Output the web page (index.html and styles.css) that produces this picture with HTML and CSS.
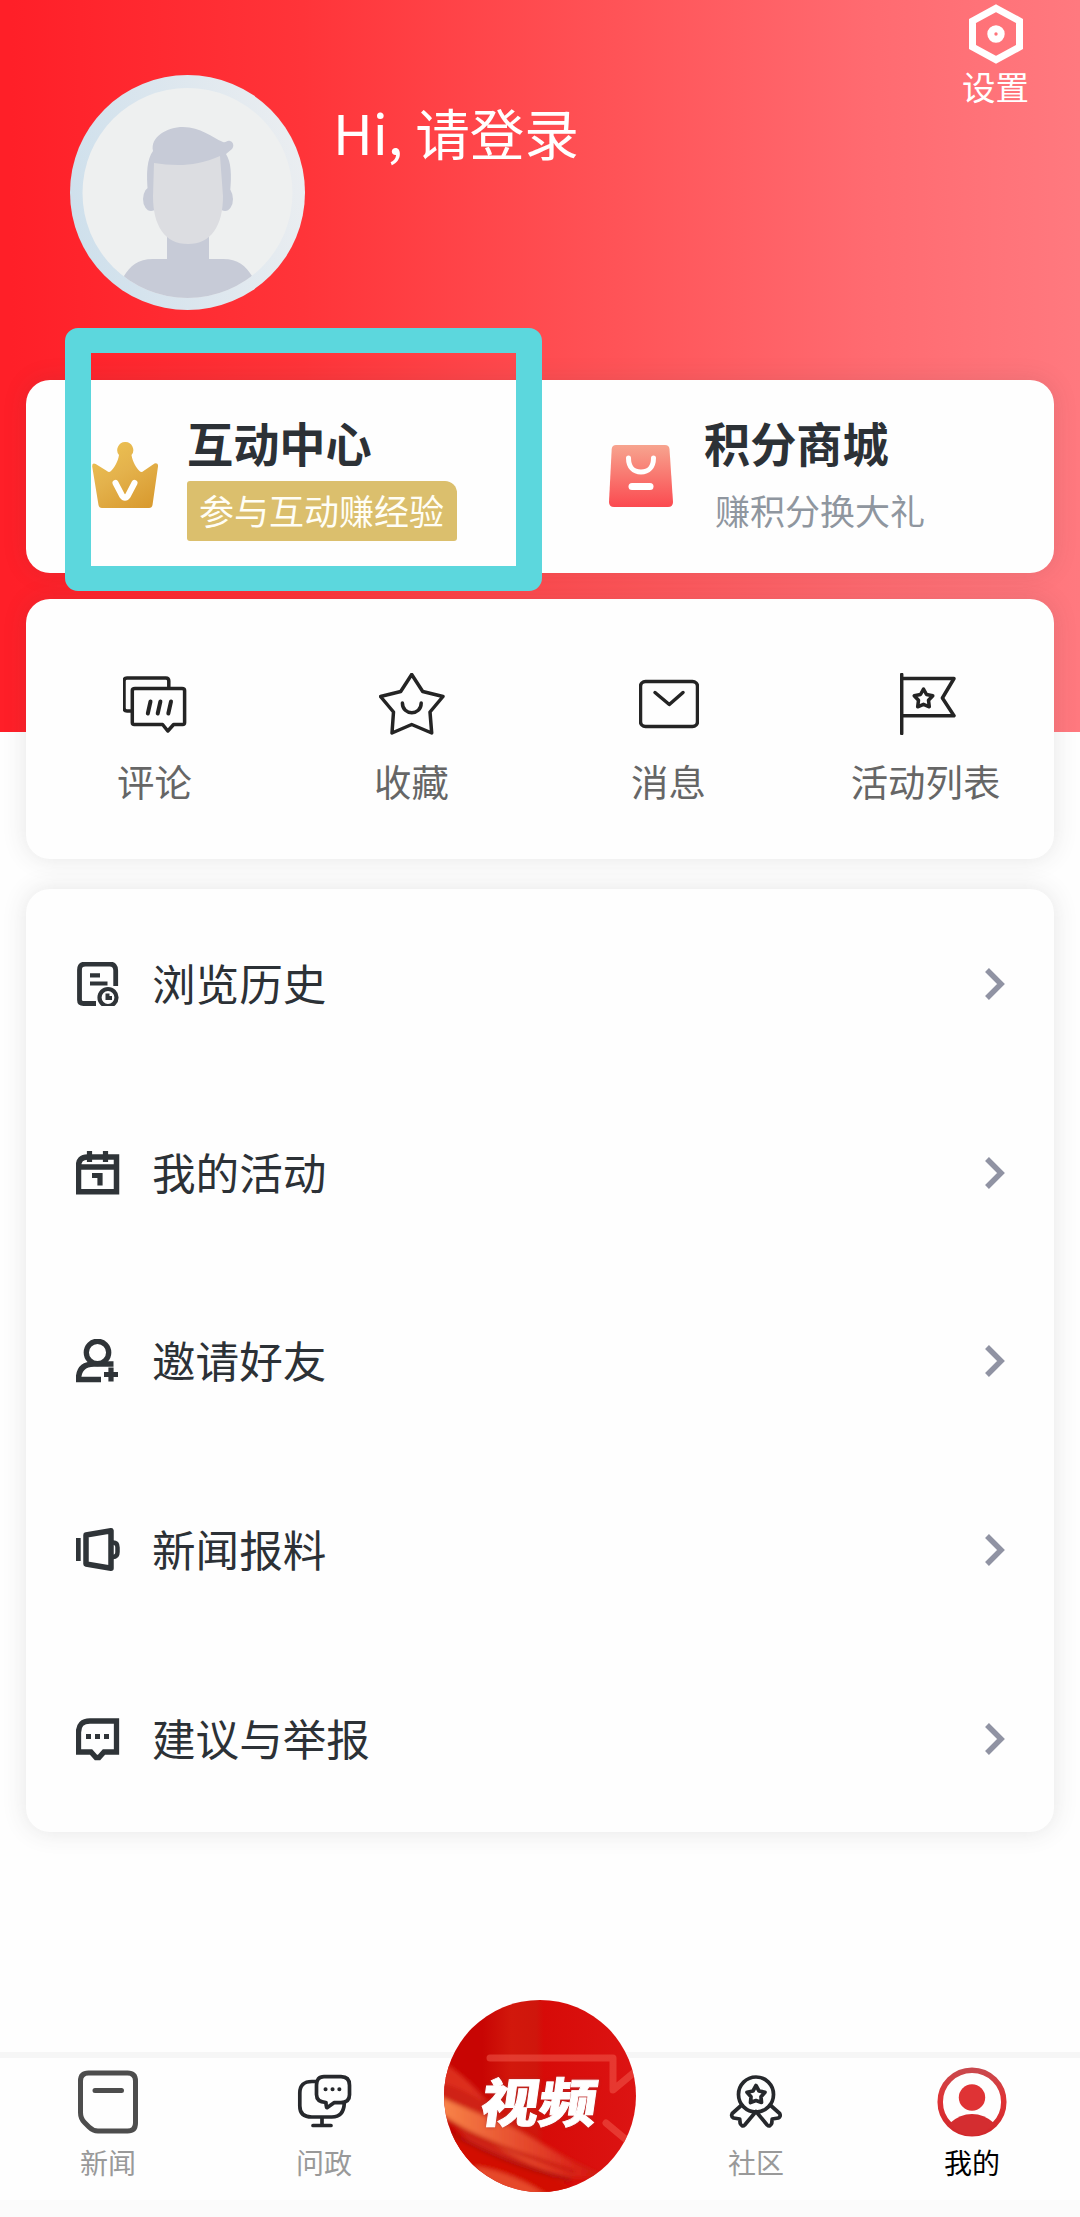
FILE: index.html
```html
<!DOCTYPE html>
<html lang="zh-CN">
<head>
<meta charset="utf-8">
<title>我的</title>
<link rel="stylesheet" href="styles.css">
</head>
<body>
<div class="app">
  <header class="profile">
    <svg class="avatar" viewBox="0 0 235 235">
      <defs>
        <linearGradient id="ring" x1="0" y1="0.5" x2="1" y2="0.3"><stop offset="0" stop-color="#cfe0ec"/><stop offset="1" stop-color="#ebeef1"/></linearGradient>
        <clipPath id="face"><circle cx="117.500" cy="118" r="105"/></clipPath>
      </defs>
      <circle cx="117.500" cy="117.500" r="117.500" fill="url(#ring)"/>
      <circle cx="117.500" cy="118" r="105" fill="#eef0f0"/>
      <g clip-path="url(#face)">
        <path d="M97 158h42v26h14c15 0 23 7 29 17l-10 30H62l-8-30c6-10 14-17 29-17h14z" fill="#c7cbd7"/>
        <ellipse cx="81" cy="124" rx="8" ry="12" fill="#c7cbd7"/>
        <ellipse cx="155" cy="124" rx="8" ry="12" fill="#c7cbd7"/>
        <path d="M78 118c-2-20-1-34 5-42-3-14 14-24 30-24 18 0 28 10 40 15 3 1 4-2 7-1 4 1 4 6 2 8l-6 5c5 8 6 20 4 39l-6 10H82z" fill="#c7cbd7"/>
        <path d="M84 88c20 3 42 4 66-7l3 40c0 30-12 48-35 48S83 151 83 121z" fill="#dcdde1"/>
      </g>
    </svg>
    <div class="greeting">Hi, 请登录</div>
    <div class="settings">
      <svg width="54" height="60" viewBox="0 0 54 60" fill="none" stroke="#fff">
        <path d="M27 4.200 50.500 17v26L27 55.800 3.500 43V17z" stroke-width="7"/>
        <circle cx="27" cy="30" r="5.200" stroke-width="7"/>
      </svg>
      <span>设置</span>
    </div>
  </header>

  <section class="card promos">
    <div class="promo">
      <svg class="promo-icon" width="66" height="66" viewBox="0 0 66 66">
        <defs><linearGradient id="gold" x1="0.2" y1="0" x2="0.800" y2="1"><stop offset="0" stop-color="#ecc152"/><stop offset="0.450" stop-color="#e4b24c"/><stop offset="1" stop-color="#d99b30"/></linearGradient></defs>
        <path d="M33 0a8 8 0 0 1 6.500 13c1 7 5 13 8 16q2 2 4 0l11-7.500q4-1 3.500 3L60.500 63q-.5 3-3.500 3H10q-3 0-3.500-3L.2 24.500q-.3-4 3.500-2.500L15 29q2 2 4 0c3-3 7-9 8-16A8 8 0 0 1 33 0z" fill="url(#gold)"/>
        <path d="M23.500 41l6.500 12.500q3 4.500 6 0L42.500 41" fill="none" stroke="#fff" stroke-width="6" stroke-linecap="round"/>
      </svg>
      <div class="promo-text">
        <b>互动中心</b>
        <span class="tag">参与互动赚经验</span>
      </div>
      <i class="highlight"></i>
    </div>
    <div class="promo">
      <svg class="promo-icon" width="66" height="66" viewBox="-1 0 66 66">
        <defs><linearGradient id="coral" x1="0" y1="0" x2="0" y2="1"><stop offset="0" stop-color="#f7a48f"/><stop offset="1" stop-color="#fb4a50"/></linearGradient></defs>
        <path d="M8 3h49q4 0 4.500 4L65 60q0 5-5 5H6q-5 0-5-5L3.700 7Q4.200 3 8 3z" fill="url(#coral)"/>
        <path d="M20.500 16c0 9 5 14 12.500 14s12.500-5 12.500-14" fill="none" stroke="#fff" stroke-width="5" stroke-linecap="round"/>
        <path d="M24 44.500h18" stroke="#fff" stroke-width="7" stroke-linecap="round"/>
      </svg>
      <div class="promo-text">
        <b>积分商城</b>
        <span class="hint">赚积分换大礼</span>
      </div>
    </div>
  </section>

  <section class="card shortcuts">
    <div class="shortcut">
      <svg width="64" height="62" viewBox="0 -4 64 62">
        <path d="M9.300 34H4q-3 0-3-3V4q0-3 3-3h38.800q3 0 3 3v7.500M12 11.500h47q2.600 0 2.600 2v32q0 2-2 2h-9l-5.800 6.500-5.200-6.500H11.300q-2 0-2-2v-32q0-2 2.700-2z"/>
        <path d="M27.500 24.500l-2.700 12m12.600-12-2.700 12m13.300-12-2.700 12" stroke-width="4"/>
      </svg>
      <span>评论</span>
    </div>
    <div class="shortcut">
      <svg width="66" height="62" viewBox="0 0 66 62"><path d="M32.700 1.500l11 17L64 23.500 51 39l1.700 21-20-8.500L13 60l1.500-21L1.500 23.500l20.200-5zM23.400 30c0 13 18.800 13 18.800 0"/></svg>
      <span>收藏</span>
    </div>
    <div class="shortcut">
      <svg width="60" height="62" viewBox="0 -7 60 62"><rect x="1.500" y="1.500" width="57" height="45" rx="5"/><path d="M16 12.500l14.300 12L44 12.500"/></svg>
      <span>消息</span>
    </div>
    <div class="shortcut">
      <svg class="flag" width="56" height="62" viewBox="0 0 56 62"><path d="M1.700 1.500v59M1.700 5.500H54L42.400 25 54 42.700H1.700"/><path d="M23.500 16l3 5.500 6.300 1.200-4.300 4.600.8 6.500-5.800-2.500-5.800 2.500.8-6.500-4.300-4.600 6.300-1.200z"/></svg>
      <span>活动列表</span>
    </div>
  </section>

  <section class="card menu">
    <div class="row">
      <svg class="row-icon" viewBox="0 0 44 44"><path d="M39.700 24V8.500q0-6.500-6-6.500H9.500q-6 0-6 6v30q0 3.500 4 3.500H20" stroke-width="4.800"/><path d="M14 13.300h10M14 21.500h17.500" stroke-width="4.200"/><circle cx="32" cy="35.500" r="8.500" stroke-width="4.200"/><path d="M31.500 31.500V36H36" stroke-width="4"/></svg>
      <span>浏览历史</span>
      <svg class="arrow" viewBox="0 0 20 32"><path d="M2 2l14 14L2 30"/></svg>
    </div>
    <div class="row">
      <svg class="row-icon" viewBox="0 0 44 44"><path d="M2.500 40.700V15q0-9 9-9h29v34.700zM2.500 16h38" stroke-width="5.500"/><path d="M13.500 0v11M29.500 0v11M16 24.500h8V34.500" stroke-width="5.200"/></svg>
      <span>我的活动</span>
      <svg class="arrow" viewBox="0 0 20 32"><path d="M2 2l14 14L2 30"/></svg>
    </div>
    <div class="row">
      <svg class="row-icon" viewBox="0 0 44 44"><circle cx="21.500" cy="13.500" r="11.200" stroke-width="5.300"/><path d="M37.500 25H18Q2.500 25 2.500 40.500H25" stroke-width="5.500"/><path d="M35 28.500v14M28 35.500h14" stroke-width="5.200"/></svg>
      <span>邀请好友</span>
      <svg class="arrow" viewBox="0 0 20 32"><path d="M2 2l14 14L2 30"/></svg>
    </div>
    <div class="row">
      <svg class="row-icon" viewBox="0 0 44 44"><path d="M2.300 10v23" stroke-width="4.800"/><path d="M10 7l25-4.200v37.400L10 36z" stroke-width="5.500" stroke-linejoin="round"/><path d="M37 14.500q4.500 0 4.500 5v4.500q0 5-4.500 5" stroke-width="4.500"/></svg>
      <span>新闻报料</span>
      <svg class="arrow" viewBox="0 0 20 32"><path d="M2 2l14 14L2 30"/></svg>
    </div>
    <div class="row">
      <svg class="row-icon" viewBox="0 -1.500 44 44"><path d="M2.500 33.500V14q0-11.500 11.500-11.500h26.500v31H28l-5 5.500h-3l-5-5.500z" stroke-width="5.300"/><path d="M10 18h5M19 18h5M28 18h5" stroke-width="5"/></svg>
      <span>建议与举报</span>
      <svg class="arrow" viewBox="0 0 20 32"><path d="M2 2l14 14L2 30"/></svg>
    </div>
  </section>

  <nav class="tabs">
    <div class="tab">
      <svg width="70" height="70" viewBox="-5 -3.500 70 70" stroke="#4d4d4d" stroke-width="5"><path d="M10.500 2.500h39q8 0 8 8v42q0 8-8 8H20Q15 60.500 11 56.500L6.500 52Q2.500 48 2.500 42V10.500q0-8 8-8zM17 20h26.500"/></svg>
      <span>新闻</span>
    </div>
    <div class="tab">
      <svg width="70" height="70" viewBox="-9 -8 70 70" stroke="#26282c" stroke-width="3.700"><path d="M18 6.500h-4Q1.800 6.500 1.800 18v13q0 11 12 11h20q12 0 12.500-14M24 42v8M15 50.500h18M26 1.700h17q8.500 0 8.500 8.500v9.500q0 7.500-8.500 8h-7l-7 5q-1-.2-1-5.200-9.500-.5-9.500-8v-9.500q0-8.300 7.500-8.300z"/><path d="M27.500 14.300h.1M34.500 14.300h.1M41.300 14.300h.1" stroke-width="4"/></svg>
      <span>问政</span>
    </div>
    <div class="tab tab-video">
      <svg class="video-art" viewBox="0 0 192 192">
        <defs>
          <clipPath id="disc"><circle cx="96" cy="96" r="96"/></clipPath>
          <filter id="soft"><feGaussianBlur stdDeviation="2"/></filter>
          <linearGradient id="red" x1="0" y1="0" x2="1" y2="0"><stop offset="0.200" stop-color="#c80503"/><stop offset="0.350" stop-color="#d2180c"/><stop offset="0.480" stop-color="#cf160c"/><stop offset="0.520" stop-color="#d70b08"/><stop offset="1" stop-color="#dc1413"/></linearGradient>
          <linearGradient id="flare" x1="0" y1="0" x2="1" y2="0"><stop offset="0" stop-color="#f9874a"/><stop offset="0.400" stop-color="#ea5a34"/><stop offset="0.750" stop-color="#df3423"/><stop offset="1" stop-color="#d8150d"/></linearGradient>
        </defs>
        <g clip-path="url(#disc)">
          <path d="M0 0h192v192H0z" fill="url(#red)"/>
          <g filter="url(#soft)">
            <path d="M-6 58q30 18 60 54 40 34 110 66H60L-6 110z" fill="#cf2314"/>
            <path d="M-6 60q30 16 46 42-22-14-46-20z" fill="#dd2d1f"/>
            <path d="M-6 96q36 16 62 26t94 54q-30 4-64-12Q34 138-6 112z" fill="url(#flare)"/>
            <path d="M-6 126q56 30 96 44t50 30H60Q10 180-6 126z" fill="#d20805"/>
            <path d="M0 130q50 28 90 40l36 10" fill="none" stroke="#a90f08" stroke-width="3"/>
            <path d="M0 120q50 26 90 38l40 14" fill="none" stroke="#c5160c" stroke-width="3"/>
            <path d="M30 166q40 6 74 30H50z" fill="#e64a2c"/>
          </g>
          <path d="M46 58h123v32l24-20M162 123l24 20" fill="none" stroke="#f0574a" stroke-width="7" stroke-linejoin="round" opacity="0.550"/>
        </g>
      </svg>
      <strong>视频</strong>
    </div>
    <div class="tab">
      <svg width="70" height="70" viewBox="-8.700 -8 70 70" stroke="#26282c" stroke-width="3.700"><circle cx="26.300" cy="19.500" r="17.500"/><path d="M26.300 10.500l3 5.500 6 1.200-4 4.600.5 5.700-5.500-2-5.500 2 .5-5.700-4-4.600 6-1.200zM12 30 2.500 38.500q-1.500 3 1.500 4.500l6 1 .5 4.500q2 4 4.500 1.500L26.300 36.500 37.500 50q2.500 2.500 4.500-1.500l.5-4.500 6-1q3-1.500 1.500-4.500L40.500 30"/></svg>
      <span>社区</span>
    </div>
    <div class="tab active">
      <svg width="70" height="70" viewBox="0 0 70 70">
        <defs><linearGradient id="me" x1="0" y1="0" x2="0" y2="1"><stop offset="0" stop-color="#c9484d"/><stop offset="0.450" stop-color="#df3335"/><stop offset="1" stop-color="#d1282c"/></linearGradient></defs>
        <circle cx="35" cy="35" r="31.800" fill="none" stroke="url(#me)" stroke-width="5.500"/>
        <circle cx="35" cy="30.500" r="13.200" fill="#df3335"/>
        <path d="M13 56q10-9 22-9t22 9q-8 12.500-22 12.500T13 56z" fill="#d42d30"/>
      </svg>
      <span>我的</span>
    </div>
  </nav>
</div>
</body>
</html>
```
FILE: styles.css
```css
* { box-sizing: border-box; }

body {
  margin: 0;
  font-family: "Noto Sans CJK SC", "Noto Sans", sans-serif;
  color: #2c3136;
  background: #fff;
}

svg { display: block; flex: none; }

.app {
  display: flex;
  flex-direction: column;
  width: 1080px;
  height: 2217px;
  overflow: hidden;
  background: linear-gradient(90deg, #ff1f28 1%, #ff3439 28%, #ff5357 57%, #ff6a70 80%, #ff797f 100%) 0 0 / 100% 732px no-repeat, #fefefe;
}

.profile {
  display: flex;
  align-items: flex-start;
  height: 380px;
  padding: 0 51px 0 70px;
  color: #fff;
}

.avatar {
  width: 235px;
  height: 235px;
  margin-top: 75px;
}

.greeting {
  margin: 92px auto 0 28px;
  font-size: 54.600px;
  line-height: 80px;
}

.settings {
  display: flex;
  flex-direction: column;
  align-items: center;
  padding-top: 3.500px;
  font-size: 33.500px;
  line-height: 44px;
}

.card {
  flex: none;
  margin: 0 26px;
  border-radius: 24px;
  background: #fefefe;
  box-shadow: 0 0 24px rgba(60, 60, 60, 0.13);
}

.promos {
  display: grid;
  grid-template-columns: 515px 1fr;
  height: 193px;
}

.promo {
  position: relative;
  display: flex;
  padding: 29px 0 0 66px;
}

.promo-icon { margin-top: 33px; }

.promo-text {
  display: flex;
  flex-direction: column;
  align-items: flex-start;
  padding-left: 29px;
}

.promo-text b {
  font-size: 46.200px;
  line-height: 66px;
}

.promo + .promo .promo-text b { padding-left: 2px; }

.tag, .hint {
  height: 60px;
  margin-top: 6px;
  font-size: 35px;
  line-height: 57px;
}

.tag {
  padding: 0 13px 0 12px;
  border-radius: 3px 12px 3px 3px;
  background: #dbbf6d;
  color: #fffef6;
}

.hint {
  padding-left: 13px;
  color: #8f969f;
}

.highlight {
  position: absolute;
  left: 39px;
  top: -52px;
  width: 477px;
  height: 263px;
  border: 25px solid #5cd7dd;
  border-width: 25px 26px;
  border-radius: 13px;
}

.shortcuts {
  display: grid;
  grid-template-columns: repeat(4, 1fr);
  height: 260px;
  margin-top: 26px;
}

.shortcut {
  display: flex;
  flex-direction: column;
  align-items: center;
  padding-top: 74px;
  font-size: 37.400px;
  line-height: 54px;
  color: #666;
}

.shortcut svg {
  height: 62px;
  fill: none;
  stroke: #242424;
  stroke-width: 3.500;
  stroke-linejoin: round;
  stroke-linecap: round;
}

.shortcut .flag { margin-left: 4px; }

.shortcut span { margin-top: 19px; }

.menu {
  display: flex;
  flex-direction: column;
  height: 943px;
  margin-top: 30px;
}

.row {
  display: flex;
  flex: 1;
  align-items: center;
  padding: 2px 49px 0 50px;
  font-size: 43.600px;
  line-height: 64px;
}

.row-icon {
  width: 44px;
  height: 44px;
  fill: none;
  stroke: #2f3438;
}

.row span {
  margin: 0 auto 0 32px;
  padding-bottom: 4px;
}

.arrow {
  width: 20px;
  height: 32px;
  fill: none;
  stroke: #9093a3;
  stroke-width: 5.500;
}

.tabs {
  display: grid;
  grid-template-columns: repeat(5, 1fr);
  height: 165px;
  margin-top: auto;
  border-top: 6px solid #f6f6f6;
  border-bottom: 17px solid #fbfbfb;
}

.tab {
  position: relative;
  display: flex;
  flex-direction: column;
  align-items: center;
  padding-top: 9px;
  font-size: 28px;
  line-height: 40px;
  color: #999;
}

.tab > svg {
  fill: none;
  stroke-linecap: round;
  stroke-linejoin: round;
}

.tab span { margin-top: 5px; }

.active { color: #000; }

.tab-video .video-art {
  position: absolute;
  left: 12px;
  top: -58px;
  width: 192px;
  height: 192px;
}

.tab-video strong {
  position: relative;
  margin-top: 2px;
  font-size: 58px;
  font-weight: 900;
  line-height: 60px;
  color: #fff;
  transform: skewX(-8deg) scaleY(0.900);
  -webkit-text-stroke: 1px #fff;
  text-shadow: 0 0 4px #a33;
}
```
